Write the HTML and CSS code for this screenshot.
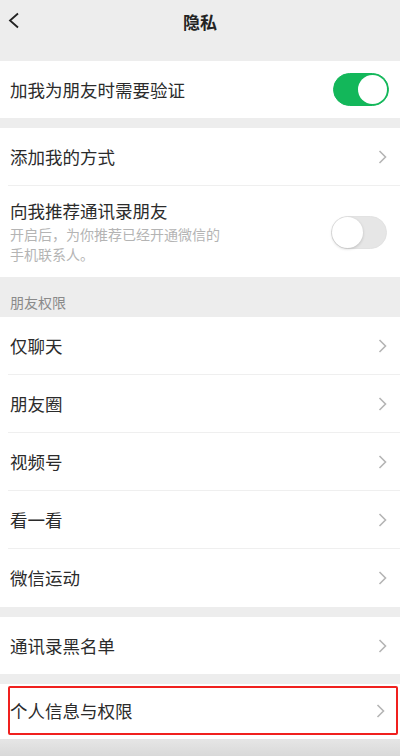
FILE: index.html
```html
<!DOCTYPE html>
<html lang="zh-CN">
<head>
    <meta charset="UTF-8">
    <meta name="viewport" content="width=device-width, initial-scale=1.0">
    <title>隐私</title>
    <link rel="stylesheet" href="styles.css">
</head>
<body>
    <div class="nav">
        <svg class="back" width="12" height="17" viewBox="0 0 12 17"><polyline points="10,1.5 2,8.5 10,15.5" fill="none" stroke="#222" stroke-width="1.8"/></svg>
        <div class="nav-title">隐私</div>
    </div>

    <div class="group first">
        <div class="row">
            <span class="label">加我为朋友时需要验证</span>
            <span class="switch on"><span class="knob"></span></span>
        </div>
    </div>

    <div class="group">
        <div class="row line">
            <span class="label">添加我的方式</span>
            <svg class="arrow" width="9" height="14" viewBox="0 0 9 14"><polyline points="1.5,1 7.5,7 1.5,13" fill="none" stroke="#b5b5b5" stroke-width="1.6"/></svg>
        </div>
        <div class="row tall">
            <div class="text">
                <div class="label">向我推荐通讯录朋友</div>
                <div class="desc">开启后，为你推荐已经开通微信的<br>手机联系人。</div>
            </div>
            <span class="switch"><span class="knob"></span></span>
        </div>
    </div>

    <div class="section-title">朋友权限</div>

    <div class="group flush">
        <div class="row line">
            <span class="label">仅聊天</span>
            <svg class="arrow" width="9" height="14" viewBox="0 0 9 14"><polyline points="1.5,1 7.5,7 1.5,13" fill="none" stroke="#b5b5b5" stroke-width="1.6"/></svg>
        </div>
        <div class="row line">
            <span class="label">朋友圈</span>
            <svg class="arrow" width="9" height="14" viewBox="0 0 9 14"><polyline points="1.5,1 7.5,7 1.5,13" fill="none" stroke="#b5b5b5" stroke-width="1.6"/></svg>
        </div>
        <div class="row line">
            <span class="label">视频号</span>
            <svg class="arrow" width="9" height="14" viewBox="0 0 9 14"><polyline points="1.5,1 7.5,7 1.5,13" fill="none" stroke="#b5b5b5" stroke-width="1.6"/></svg>
        </div>
        <div class="row line">
            <span class="label">看一看</span>
            <svg class="arrow" width="9" height="14" viewBox="0 0 9 14"><polyline points="1.5,1 7.5,7 1.5,13" fill="none" stroke="#b5b5b5" stroke-width="1.6"/></svg>
        </div>
        <div class="row">
            <span class="label">微信运动</span>
            <svg class="arrow" width="9" height="14" viewBox="0 0 9 14"><polyline points="1.5,1 7.5,7 1.5,13" fill="none" stroke="#b5b5b5" stroke-width="1.6"/></svg>
        </div>
    </div>

    <div class="group">
        <div class="row">
            <span class="label">通讯录黑名单</span>
            <svg class="arrow" width="9" height="14" viewBox="0 0 9 14"><polyline points="1.5,1 7.5,7 1.5,13" fill="none" stroke="#b5b5b5" stroke-width="1.6"/></svg>
        </div>
    </div>

    <div class="group marked">
        <div class="row boxed">
            <span class="label">个人信息与权限</span>
            <svg class="arrow" width="9" height="14" viewBox="0 0 9 14"><polyline points="1.5,1 7.5,7 1.5,13" fill="none" stroke="#b5b5b5" stroke-width="1.6"/></svg>
        </div>
    </div>

    <div class="bottom"></div>
</body>
</html>
```

FILE: styles.css
```css
body {
    margin: 0;
    width: 400px;
    height: 756px;
    overflow: hidden;
    background: #ededed; /* page gray */
    font-family: "Noto Sans CJK SC", "Noto Sans", sans-serif;
    color: #2b2b2b;
}

/* top bar */
.nav {
    height: 42px;
    display: flex;
    align-items: center;
    justify-content: center;
    position: relative;
}
.back {
    position: absolute;
    left: 8px;
    top: 12px;
}
.nav-title {
    font-size: 17px;
    font-weight: 700;
    color: #222;
}

/* white blocks */
.group {
    background: #fff;
    margin-top: 10px;
    padding-left: 8px;
}
.group.first {
    margin-top: 19px;
}
.group.flush {
    margin-top: 0;
}

.row {
    box-sizing: border-box;
    height: 57px;
    display: flex;
    align-items: center;
    justify-content: space-between;
    padding: 0 13px 0 2px;
}
.row.line {
    height: 58px;
    border-bottom: 1px solid #efefef;
}
.group.flush .row {
    height: 58px;
}
.row.tall {
    height: 91px;
    align-items: flex-start;
    padding-top: 12px;
}
.row.tall .switch {
    margin-top: 18px;
    margin-right: 0;
}

.label {
    font-size: 17.5px;
    line-height: 26px;
    color: #2b2b2b;
}
.desc {
    font-size: 14px;
    line-height: 20px;
    color: #b4b4b4;
    margin-top: 0;
}
.arrow {
    flex-shrink: 0;
}

/* switches */
.switch {
    box-sizing: border-box;
    width: 56px;
    height: 33px;
    border-radius: 17px;
    background: #e6e6e6;
    border: 1px solid #e2e2e2;
    display: flex;
    align-items: center;
    margin-right: -2px;
}
.switch .knob {
    width: 31px;
    height: 31px;
    border-radius: 50%;
    background: #fff;
    box-shadow: 0 1px 3px rgba(0, 0, 0, 0.18);
}
.switch.on {
    background: #13b75a;
    border-color: #13b75a;
    justify-content: flex-end;
    padding-right: 1px;
}
.switch.on .knob {
    width: 29px;
    height: 29px;
    box-shadow: none;
}

.section-title {
    height: 40px;
    box-sizing: border-box;
    padding: 15px 0 0 10px;
    font-size: 14px;
    color: #8a8a8a;
}

/* highlighted entry */
.group.marked {
    padding: 2px 2px 4px 8px;
}
.row.boxed {
    height: 49px;
    border: 2px solid #f0201e;
    border-radius: 2px;
    padding: 0 11px 0 0;
}

.bottom {
    height: 18px;
    background: linear-gradient(#e6e6e6, #d8d8d8);
}
```
